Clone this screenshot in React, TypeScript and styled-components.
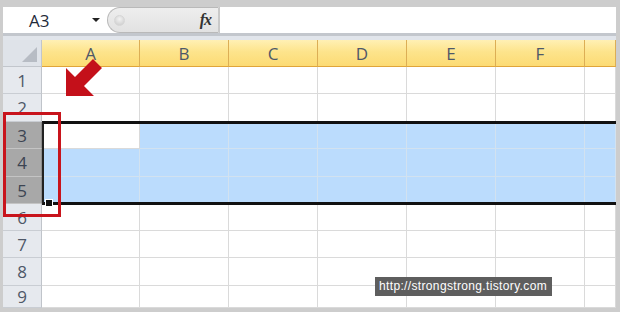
import React from "react";
import styled, { createGlobalStyle } from "styled-components";

const Global = createGlobalStyle`
  html, body { margin: 0; padding: 0; }
  body { width: 620px; height: 312px; overflow: hidden; background: #cfcfcf; }
`;

const Frame = styled.div`
  position: relative;
  width: 620px;
  height: 312px;
  box-sizing: border-box;
  padding: 7px 4px 4px 3px;
  background: #cdcdcd;
  display: flex;
  flex-direction: column;
  font-family: "Open Sans", "DejaVu Sans", sans-serif;
`;

const FormulaBar = styled.div`
  display: flex;
  height: 26px;
  background: #fff;
`;

const NameBox = styled.div`
  width: 104px;
  display: flex;
  align-items: center;
  box-sizing: border-box;
  padding-left: 26px;
  font-size: 17px;
  color: #1f2a3a;
  position: relative;
`;

const DropArrow = styled.span`
  position: absolute;
  left: 89px;
  top: 11px;
  width: 0;
  height: 0;
  border-left: 4px solid transparent;
  border-right: 4px solid transparent;
  border-top: 4px solid #222;
`;

const Capsule = styled.div`
  width: 112px;
  box-sizing: border-box;
  background: linear-gradient(#eeeeee, #e2e2e2);
  border: 1px solid #b9b9b9;
  border-right-color: #c9c9c9;
  border-radius: 14px 0 0 14px;
  display: flex;
  align-items: center;
  justify-content: space-between;
  padding: 0 7px 0 6px;
`;

const Knob = styled.span`
  width: 9px;
  height: 9px;
  border-radius: 50%;
  background: radial-gradient(circle at 50% 35%, #f2f2f2, #c9c9c9);
  border: 1px solid #d6d6d6;
`;

const Fx = styled.span`
  font-family: "Liberation Serif", serif;
  font-style: italic;
  font-weight: bold;
  font-size: 16px;
  color: #333;
  letter-spacing: -1px;
`;

const FormulaInput = styled.div`
  flex: 1;
  background: #fff;
  border-left: 1px solid #c9c9c9;
`;

const Separator = styled.div`
  height: 3px;
  background: #c3c7cd;
`;

const Band = styled.div`
  height: 4px;
  background: #e1e5eb;
`;

const Sheet = styled.div`
  position: relative;
  flex: 1;
  overflow: hidden;
  background: #fff;
  display: grid;
  grid-template-columns: 39px 98px repeat(5, 89px) 1fr;
  grid-template-rows: 27px 27px 28px 27px 28px 27px 27px 27px 28px 22px;
`;

const Corner = styled.div`
  position: relative;
  background: #dfe3e9;
  border-right: 1px solid #c2c6cc;
  border-bottom: 1px solid #c2c6cc;
  box-sizing: border-box;
`;

const CornerTriangle = styled.span`
  position: absolute;
  right: 4px;
  bottom: 4px;
  width: 0;
  height: 0;
  border-left: 15px solid transparent;
  border-bottom: 15px solid #b7bcc4;
`;

const ColHeader = styled.div`
  box-sizing: border-box;
  background: linear-gradient(#fff0b4 0%, #fde48c 45%, #fcdb74 100%);
  border-right: 1px solid #dcae55;
  border-bottom: 1px solid #e0a53a;
  display: flex;
  align-items: center;
  justify-content: center;
  font-size: 17px;
  color: #4e5868;
`;

const RowHeader = styled.div<{ $sel?: boolean }>`
  box-sizing: border-box;
  background: ${(p) => (p.$sel ? "#a8a8a8" : "#e6e9ee")};
  border-right: 1px solid ${(p) => (p.$sel ? "#8e8e8e" : "#c0c4ca")};
  border-bottom: 1px solid ${(p) => (p.$sel ? "#c4c4c4" : "#c9cdd3")};
  display: flex;
  align-items: center;
  justify-content: center;
  font-size: 17px;
  color: ${(p) => (p.$sel ? "#3c4452" : "#4e5868")};
`;

const Cell = styled.div<{ $sel?: boolean }>`
  box-sizing: border-box;
  background: ${(p) => (p.$sel ? "#bbdcfd" : "#fff")};
  border-right: 1px solid ${(p) => (p.$sel ? "#d2e2f0" : "#dadada")};
  border-bottom: 1px solid ${(p) => (p.$sel ? "#d2e2f0" : "#dadada")};
`;

const SelectionBorder = styled.div`
  position: absolute;
  left: 39px;
  top: 81px;
  right: -4px;
  height: 84px;
  box-sizing: border-box;
  border-top: 3px solid #111;
  border-bottom: 3px solid #111;
  border-left: 2px solid #222;
  pointer-events: none;
`;

const FillHandle = styled.span`
  position: absolute;
  left: 1px;
  bottom: -5px;
  width: 6px;
  height: 6px;
  background: #111;
  border: 1px solid #fff;
`;

const RedBox = styled.div`
  position: absolute;
  left: 3px;
  top: 112px;
  width: 58px;
  height: 105px;
  box-sizing: border-box;
  border: 3px solid #c8141c;
`;

const Arrow = styled.svg`
  position: absolute;
  left: 60px;
  top: 54px;
`;

const Watermark = styled.div`
  position: absolute;
  left: 375px;
  top: 277px;
  width: 177px;
  height: 19px;
  background: #5e5e5e;
  color: #fff;
  font-family: "Liberation Sans", sans-serif;
  font-size: 12px;
  letter-spacing: 0.35px;
  line-height: 19px;
  padding-left: 4px;
  box-sizing: border-box;
  white-space: nowrap;
`;

const cols = ["A", "B", "C", "D", "E", "F", ""];
const rows = [1, 2, 3, 4, 5, 6, 7, 8, 9];

export default function App() {
  return (
    <>
      <Global />
      <Frame>
        <FormulaBar>
          <NameBox>
            A3
            <DropArrow />
          </NameBox>
          <Capsule>
            <Knob />
            <Fx>fx</Fx>
          </Capsule>
          <FormulaInput />
        </FormulaBar>
        <Separator />
        <Band />
        <Sheet>
          <Corner>
            <CornerTriangle />
          </Corner>
          {cols.map((c, i) => (
            <ColHeader key={i}>{c}</ColHeader>
          ))}
          {rows.map((r) => {
            const sel = r >= 3 && r <= 5;
            return (
              <React.Fragment key={r}>
                <RowHeader $sel={sel}>{r}</RowHeader>
                {cols.map((_, ci) => (
                  <Cell key={ci} $sel={sel && !(r === 3 && ci === 0)} />
                ))}
              </React.Fragment>
            );
          })}
          <SelectionBorder>
            <FillHandle />
          </SelectionBorder>
        </Sheet>
        <RedBox />
        <Arrow width="46" height="46" viewBox="60 54 46 46">
          <polygon
            points="66,96 66,68 75,77 93,59 102,68 84,86 94,96"
            fill="#c4101a"
          />
        </Arrow>
        <Watermark>http://strongstrong.tistory.com</Watermark>
      </Frame>
    </>
  );
}
